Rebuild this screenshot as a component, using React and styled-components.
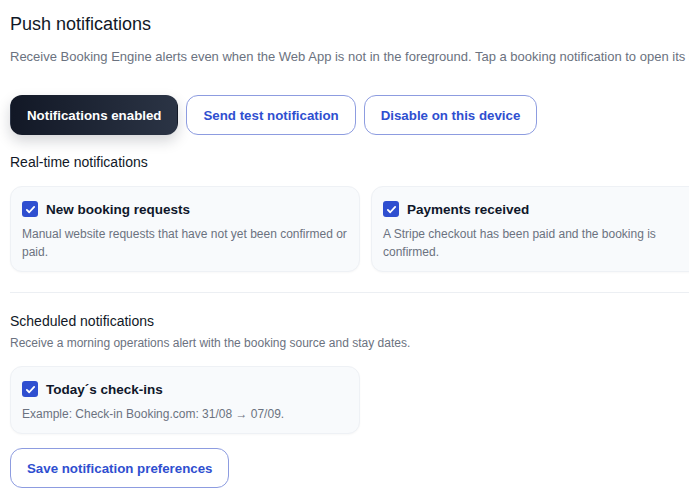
import React from 'react'
import styled, { createGlobalStyle } from 'styled-components'

const GlobalStyle = createGlobalStyle`
  html, body {
    margin: 0;
    padding: 0;
    background: #ffffff;
    overflow: hidden;
  }
  body {
    font-family: "Segoe UI", "Liberation Sans", Arial, sans-serif;
    color: #111827;
  }
`

const Page = styled.div`
  width: 711px;
  padding: 8px 10px 0 10px;
`

const Title = styled.h2`
  margin: 0;
  font-size: 18px;
  font-weight: 400;
  line-height: 32px;
  color: #111827;
`

const Lead = styled.p`
  margin: 8px 0 0 0;
  font-size: 13px;
  line-height: 18px;
  color: #6b7280;
  white-space: nowrap;
`

const Actions = styled.div`
  display: flex;
  gap: 8px;
  margin-top: ${p => p.$top || 14}px;
`

const Button = styled.button`
  height: 40px;
  padding: 0 16px;
  border-radius: 12px;
  font-family: "Segoe UI", "Liberation Sans", Arial, sans-serif;
  font-size: 13.3px;
  font-weight: 700;
  cursor: pointer;
  border: 1px solid ${p => (p.$primary ? 'transparent' : '#8d9ce0')};
  background: ${p => (p.$primary ? 'linear-gradient(90deg, #121826, #2b3445)' : '#ffffff')};
  color: ${p => (p.$primary ? '#ffffff' : '#2f4fd0')};
  box-shadow: ${p => (p.$primary ? '0 6px 14px rgba(17, 24, 39, 0.18)' : 'none')};
`

const SectionTitle = styled.h3`
  margin: ${p => p.$top || 18}px 0 0 0;
  font-size: 14px;
  font-weight: 400;
  line-height: 20px;
  color: #111827;
`

const SectionNote = styled.p`
  margin: 4px 0 0 0;
  font-size: 12px;
  line-height: 17px;
  color: #6b7280;
`

const Grid = styled.div`
  display: grid;
  grid-template-columns: 350px 350px;
  gap: 11px;
  margin-top: 14px;
`

const Card = styled.label`
  display: flex;
  flex-direction: column;
  gap: 7px;
  padding: 13px 8px 10px 11px;
  background: #f8fafc;
  border: 1px solid #eef1f5;
  border-radius: 12px;
  box-shadow: 0 1px 2px rgba(15, 23, 42, 0.03);
`

const CardHead = styled.div`
  display: flex;
  align-items: center;
  gap: 8px;
  height: 18px;
`

const Check = styled.span`
  width: 16px;
  height: 16px;
  border-radius: 3px;
  background: #2f4fd0;
  display: flex;
  align-items: center;
  justify-content: center;
  flex-shrink: 0;
`

const CardTitle = styled.span`
  font-size: 13.5px;
  font-weight: 700;
  color: #0f172a;
`

const CardText = styled.p`
  margin: 0;
  font-size: 12px;
  line-height: 18px;
  color: #6b7280;
`

const Divider = styled.hr`
  margin: 20px 0 0 0;
  border: none;
  border-top: 1px solid #eceff3;
`

const Checkbox = () => (
  <Check>
    <svg width="11" height="11" viewBox="0 0 12 12" fill="none">
      <path d="M2 6.4l2.6 2.6L10 3.2" stroke="#fff" strokeWidth="2" strokeLinecap="round" strokeLinejoin="round" />
    </svg>
  </Check>
)

const Option = ({ title, text }) => (
  <Card>
    <CardHead>
      <Checkbox />
      <CardTitle>{title}</CardTitle>
    </CardHead>
    <CardText>{text}</CardText>
  </Card>
)

export default function App() {
  return (
    <Page>
      <GlobalStyle />
      <Title>Push notifications</Title>
      <Lead>
        Receive Booking Engine alerts even when the Web App is not in the foreground. Tap a booking notification to open its booking.
      </Lead>
      <Actions $top={29}>
        <Button $primary>Notifications enabled</Button>
        <Button>Send test notification</Button>
        <Button>Disable on this device</Button>
      </Actions>

      <SectionTitle $top={17}>Real-time notifications</SectionTitle>
      <Grid>
        <Option
          title="New booking requests"
          text="Manual website requests that have not yet been confirmed or paid."
        />
        <Option
          title="Payments received"
          text="A Stripe checkout has been paid and the booking is confirmed."
        />
      </Grid>

      <Divider />

      <SectionTitle $top={18}>Scheduled notifications</SectionTitle>
      <SectionNote>Receive a morning operations alert with the booking source and stay dates.</SectionNote>
      <Grid>
        <Option
          title="Today´s check-ins"
          text="Example: Check-in Booking.com: 31/08 → 07/09."
        />
      </Grid>

      <Actions>
        <Button>Save notification preferences</Button>
      </Actions>
    </Page>
  )
}
